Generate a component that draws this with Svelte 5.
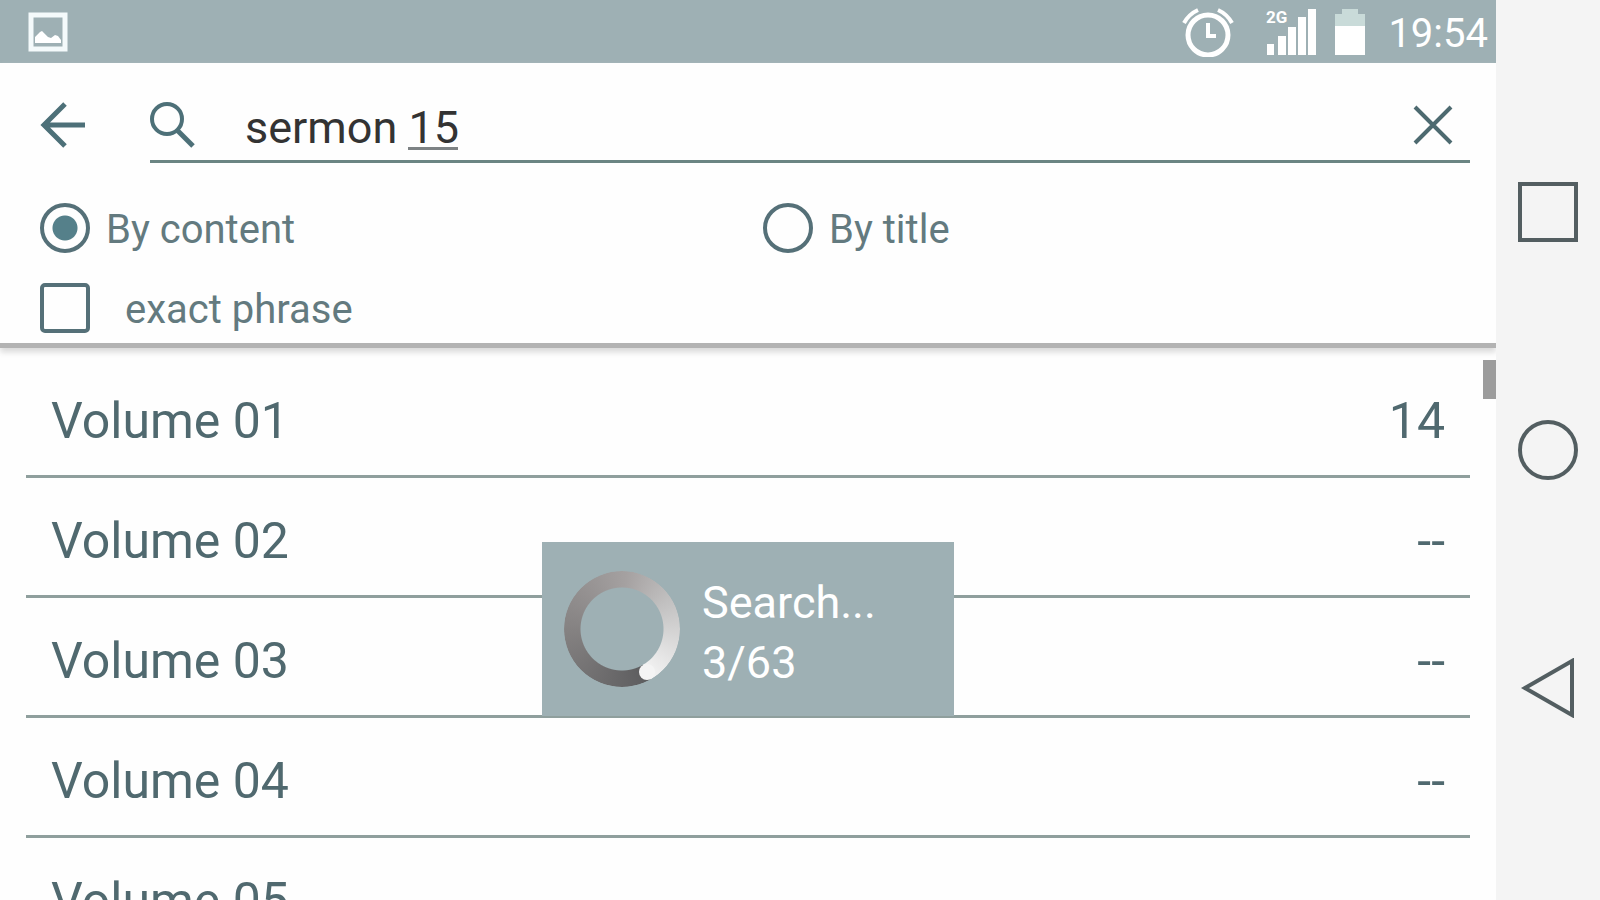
<script>
  let query = $state("sermon 15")
  let mode = $state("content")
  let exact = $state(false)
  let done = 3
  let total = 63
  const volumes = [
    { name: "Volume 01", hits: "14" },
    { name: "Volume 02", hits: "--" },
    { name: "Volume 03", hits: "--" },
    { name: "Volume 04", hits: "--" },
    { name: "Volume 05", hits: "--" }
  ]
</script>

<div class="screen">
  <div class="app">
    <div class="status">
      <svg class="picture" width="40" height="40" viewBox="0 0 40 40">
        <rect x="3" y="3" width="34" height="34" fill="none" stroke="#f4fafb" stroke-width="5"/>
        <path d="M7 31V25L12 20L14 19L20 25L23 26L27 23L30 24L33 28V31Z" fill="#fff"/>
      </svg>
      <svg class="alarm" width="52" height="50" viewBox="0 0 52 50" fill="none" stroke="#fff">
        <circle cx="26" cy="28" r="20" stroke-width="5"/>
        <path d="M2 16Q7 7 16 3M36 3Q45 7 50 16" stroke-width="4"/>
        <path d="M26 16V29H34" stroke-width="4"/>
      </svg>
      <svg class="signal" width="52" height="48" viewBox="0 0 52 48" fill="#fff">
        <text x="0" y="15" font-size="17" font-weight="700">2G</text>
        <rect x="1" y="36" width="7" height="11"/>
        <rect x="12" y="28" width="8" height="19"/>
        <rect x="22" y="19" width="8" height="28"/>
        <rect x="32" y="9" width="8" height="38"/>
        <rect x="42" y="1" width="8" height="46"/>
      </svg>
      <svg class="battery" width="32" height="48" viewBox="0 0 32 48">
        <path d="M1 6H8V1H24V6H31V19H1Z" fill="#c9dbd9"/>
        <rect x="1" y="18" width="30" height="29" fill="#fff"/>
      </svg>
      <time>19:54</time>
    </div>

    <header>
      <div class="bar">
        <button class="back" aria-label="Back">
          <svg width="46" height="46" viewBox="0 0 46 46" fill="none" stroke="#4d7078" stroke-width="5">
            <path d="M25 2L4 23L25 44M4 23H45"/>
          </svg>
        </button>
        <div class="field">
          <svg width="46" height="46" viewBox="0 0 46 46" fill="none" stroke="#4d7078">
            <circle cx="17" cy="17" r="15" stroke-width="4"/>
            <path d="M27 28L43 44" stroke-width="5"/>
          </svg>
          <div class="entry">
            <input type="text" aria-label="Search" spellcheck="false" bind:value={query}>
            {#if query == "sermon 15"}
              <span class="composing"></span>
            {/if}
          </div>
          <button aria-label="Clear" onclick={() => query = ""}>
            <svg width="40" height="40" viewBox="0 0 40 40" fill="none" stroke="#4d6a70" stroke-width="4">
              <path d="M2 2L38 38M38 2L2 38"/>
            </svg>
          </button>
        </div>
      </div>
      <div class="options">
        <label><input type="radio" name="mode" value="content" bind:group={mode}><span>By content</span></label>
        <label><input type="radio" name="mode" value="title" bind:group={mode}><span>By title</span></label>
        <label class="exact"><input type="checkbox" bind:checked={exact}><span>exact phrase</span></label>
      </div>
    </header>

    <main>
      <ul>
        {#each volumes as v}
          <li><span>{v.name}</span><span>{v.hits}</span></li>
        {/each}
      </ul>
      <div class="thumb"></div>
      <div class="overlay">
        <div class="dialog" role="status">
          <div class="spinner"></div>
          <div class="progress">Search...<br>{done}/{total}</div>
        </div>
      </div>
    </main>
  </div>

  <nav>
    <button aria-label="Recent apps">
      <svg width="60" height="60" viewBox="0 0 60 60"><rect x="2" y="2" width="56" height="56"/></svg>
    </button>
    <button aria-label="Home">
      <svg width="60" height="60" viewBox="0 0 60 60"><circle cx="30" cy="30" r="28"/></svg>
    </button>
    <button aria-label="Go back">
      <svg width="60" height="60" viewBox="0 0 60 60"><path d="M7 30L54 3V57Z"/></svg>
    </button>
  </nav>
</div>

<style>
  :global(body) {
    margin: 0;
  }
  .screen {
    display: flex;
    height: 100vh;
    overflow: hidden;
    background-color: #fefefe;
    color: #50696f;
    font-family: Roboto, "Liberation Sans", sans-serif;
  }
  .app {
    flex: 1;
    display: flex;
    flex-direction: column;
  }
  button {
    display: flex;
    padding: 0;
    border: none;
    background: none;
    cursor: pointer;
  }
  svg {
    flex: none;
  }
  .status {
    display: flex;
    align-items: center;
    height: 63px;
    padding: 0 8px 0 28px;
    background-color: #9eb0b4;
    color: white;
    font-size: 40px;
  }
  .alarm {
    margin-left: auto;
    margin-right: 32px;
  }
  .signal {
    margin-right: 16px;
  }
  .battery {
    margin-right: 22px;
  }
  time {
    padding-top: 4px;
  }
  header {
    padding-bottom: 10px;
    border-bottom: 5px solid #b3b3b3;
    box-shadow: 0 4px 6px #d8d8d8;
  }
  .bar {
    display: flex;
    padding: 0 26px 0 40px;
  }
  .back {
    align-items: center;
    margin-right: 64px;
    padding-top: 24px;
  }
  .field {
    flex: 1;
    display: flex;
    align-items: center;
    height: 70px;
    padding: 27px 17px 0 0;
    border-bottom: 3px solid #6b8583;
  }
  .entry {
    position: relative;
    flex: 1;
    margin-left: 49px;
  }
  .entry input {
    display: block;
    width: 100%;
    padding: 6px 0 0;
    border: none;
    outline: none;
    background: none;
    color: #333;
    font-family: inherit;
    font-size: 45px;
    line-height: 56px;
  }
  .composing {
    position: absolute;
    left: 163px;
    bottom: 6px;
    width: 50px;
    height: 3px;
    background-color: #7d8284;
  }
  .options {
    display: grid;
    grid-template-columns: 1fr 1fr;
    row-gap: 30px;
    padding: 40px 10px 0 40px;
    color: #637a7f;
    font-size: 40px;
    line-height: 46px;
  }
  label {
    display: flex;
    align-items: center;
    gap: 16px;
  }
  label span {
    padding-top: 4px;
  }
  .exact {
    gap: 35px;
  }
  .options input {
    appearance: none;
    width: 50px;
    height: 50px;
    margin: 0;
    border: 4px solid #557078;
  }
  input[type="radio"] {
    border-radius: 50%;
  }
  input[type="checkbox"] {
    border-radius: 5px;
  }
  input[type="radio"]:checked {
    background: radial-gradient(circle, #55808a 12px, transparent 13px);
  }
  input[type="checkbox"]:checked {
    background: #55808a;
    background-clip: content-box;
    padding: 8px;
  }
  main {
    position: relative;
    flex: 1;
    min-height: 0;
    margin-top: 10px;
  }
  ul {
    height: 100%;
    margin: 0;
    padding: 0 26px;
    overflow: hidden;
    list-style: none;
  }
  li {
    display: flex;
    justify-content: space-between;
    padding: 33px 25px 24px;
    border-bottom: 3px solid #8f9f9d;
    font-size: 50px;
    line-height: 60px;
  }
  .thumb {
    position: absolute;
    top: 2px;
    right: 0;
    width: 13px;
    height: 39px;
    background-color: #9c9c9c;
  }
  .overlay {
    position: absolute;
    inset: 0;
    display: flex;
    align-items: center;
    justify-content: center;
  }
  .dialog {
    box-sizing: border-box;
    display: flex;
    align-items: center;
    gap: 22px;
    min-width: 412px;
    padding: 22px;
    background-color: #9eb0b4;
    color: white;
    font-size: 45px;
    line-height: 60px;
  }
  .progress {
    padding: 9px 0 1px;
  }
  .spinner {
    position: relative;
    width: 116px;
    height: 116px;
  }
  .spinner::before {
    content: "";
    position: absolute;
    inset: 0;
    border-radius: 50%;
    background: conic-gradient(from 150deg, #5c5c5e, #858282 120deg, #a5a1a1 215deg, #c2c1c1 270deg, #f4f4f4 360deg);
    mask: radial-gradient(circle, transparent 41px, black 42px);
  }
  /* round end of the ring */
  .spinner::after {
    content: "";
    position: absolute;
    left: 75px;
    top: 93px;
    width: 16px;
    height: 16px;
    border-radius: 50%;
    background-color: #f4f4f4;
  }
  nav {
    display: flex;
    flex-direction: column;
    align-items: center;
    justify-content: center;
    gap: 178px;
    width: 104px;
    background-color: #f4f4f4;
  }
  nav svg {
    fill: none;
    stroke: #535e61;
    stroke-width: 4;
  }
</style>
